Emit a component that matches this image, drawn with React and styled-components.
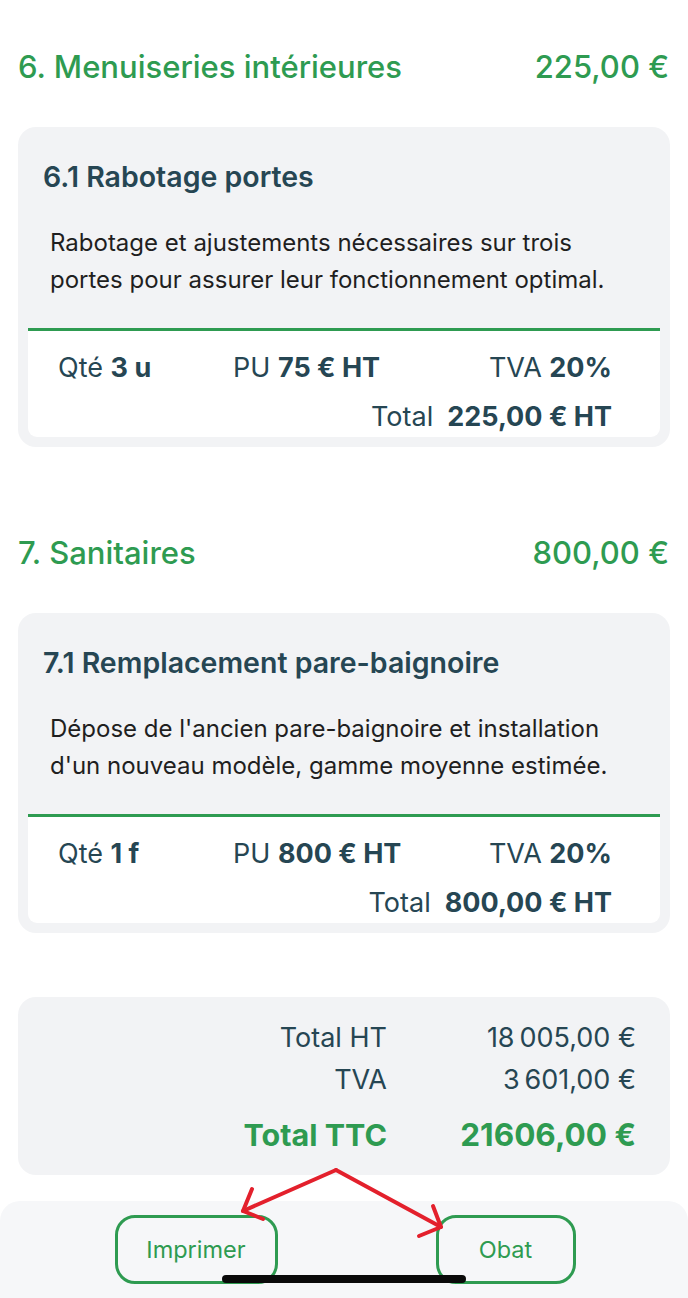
import React from "react";
import styled, { createGlobalStyle } from "styled-components";

const GlobalStyle = createGlobalStyle`
  body {
    margin: 0;
    background: #ffffff;
    font-family: Inter, "Open Sans", sans-serif;
  }
`;

const green = "#2e9b51";
const slate = "#264653";

const Page = styled.div`
  position: relative;
  width: 688px;
  height: 1298px;
  overflow: hidden;
  display: flex;
  flex-direction: column;
`;

const Content = styled.div`
  padding: 49px 18px 0;
  display: flex;
  flex-direction: column;
`;

const SectionHeader = styled.div`
  display: flex;
  justify-content: space-between;
  align-items: center;
  margin-top: ${(p) => (p.$first ? "0" : "88px")};
  font-size: 31px;
  line-height: 36px;
  font-weight: 500;
  color: ${green};
  padding-right: 1px;
`;

const Card = styled.div`
  margin-top: 42px;
  background: #f2f3f5;
  border-radius: 18px;
  padding: 34px 10px 10px;
`;

const ItemTitle = styled.h3`
  margin: 0 0 0 15px;
  font-size: 28.5px;
  line-height: 32px;
  font-weight: 600;
  color: ${slate};
`;

const ItemDesc = styled.p`
  margin: 31px 0 0 22px;
  font-size: 24px;
  line-height: 37px;
  color: #1f1f1f;
`;

const Details = styled.div`
  margin-top: 30px;
  background: #ffffff;
  border-top: 3px solid ${green};
  border-radius: 0 0 9px 9px;
  padding: 22px 48px 5px 30px;
  display: flex;
  flex-direction: column;
  gap: 19px;
  font-size: 27px;
  line-height: 30px;
  color: ${slate};
`;

const DetailRow = styled.div`
  display: grid;
  grid-template-columns: 175px 1fr auto;
  align-items: center;
`;

const TotalRow = styled.div`
  display: flex;
  justify-content: flex-end;
  gap: 14px;
`;

const Right = styled.span`
  text-align: right;
`;

const Strong = styled.b`
  font-weight: 700;
`;

const Summary = styled.div`
  margin-top: 64px;
  background: #f2f3f5;
  border-radius: 18px;
  padding: 26px 34px 22px;
  display: grid;
  grid-template-columns: 1fr 249px;
  row-gap: 12px;
  font-size: 27px;
  line-height: 30px;
  color: ${slate};
  text-align: right;
`;

const SummaryGrand = styled.span`
  margin-top: 10px;
  font-size: ${(p) => p.$size}px;
  line-height: 36px;
  font-weight: 700;
  color: ${green};
`;

const BottomBar = styled.div`
  margin-top: 26px;
  flex: 1;
  background: #f6f7f9;
  border-radius: 20px 20px 0 0;
  display: flex;
  justify-content: center;
  align-items: flex-start;
  gap: 158px;
  padding-top: 14px;
  padding-left: 2px;
`;

const ActionButton = styled.button`
  width: ${(p) => p.$w}px;
  height: 69px;
  border: 3px solid ${green};
  border-radius: 20px;
  background: transparent;
  color: ${green};
  font-family: Inter, "Open Sans", sans-serif;
  font-size: 23.5px;
  box-sizing: border-box;
  padding: 0;
`;

const HomeIndicator = styled.div`
  position: absolute;
  left: 222px;
  top: 1275px;
  width: 244px;
  height: 8px;
  border-radius: 4px;
  background: #0a0a0a;
`;

const Arrows = styled.svg`
  position: absolute;
  left: 0;
  top: 0;
  pointer-events: none;
`;

const sections = [
  {
    name: "6. Menuiseries intérieures",
    amount: "225,00 €",
    title: "6.1 Rabotage portes",
    desc: ["Rabotage et ajustements nécessaires sur trois", "portes pour assurer leur fonctionnement optimal."],
    qty: "3 u",
    pu: "75 € HT",
    tva: "20%",
    total: "225,00 € HT",
  },
  {
    name: "7. Sanitaires",
    amount: "800,00 €",
    title: "7.1 Remplacement pare-baignoire",
    desc: ["Dépose de l'ancien pare-baignoire et installation", "d'un nouveau modèle, gamme moyenne estimée."],
    qty: "1 f",
    pu: "800 € HT",
    tva: "20%",
    total: "800,00 € HT",
  },
];

export default function App() {
  return (
    <Page>
      <GlobalStyle />
      <Content>
        {sections.map((s, i) => (
          <React.Fragment key={s.name}>
            <SectionHeader $first={i === 0}>
              <span>{s.name}</span>
              <span>{s.amount}</span>
            </SectionHeader>
            <Card>
              <ItemTitle>{s.title}</ItemTitle>
              <ItemDesc>
                {s.desc[0]}
                <br />
                {s.desc[1]}
              </ItemDesc>
              <Details>
                <DetailRow>
                  <span>
                    Qté <Strong>{s.qty}</Strong>
                  </span>
                  <span>
                    PU <Strong>{s.pu}</Strong>
                  </span>
                  <Right>
                    TVA <Strong>{s.tva}</Strong>
                  </Right>
                </DetailRow>
                <TotalRow>
                  <span>Total</span>
                  <Strong>{s.total}</Strong>
                </TotalRow>
              </Details>
            </Card>
          </React.Fragment>
        ))}
        <Summary>
          <span>Total HT</span>
          <span>18{"\u202F"}005,00 €</span>
          <span>TVA</span>
          <span>3{"\u202F"}601,00 €</span>
          <SummaryGrand $size={30.5}>Total TTC</SummaryGrand>
          <SummaryGrand $size={31.5}>21606,00 €</SummaryGrand>
        </Summary>
      </Content>
      <BottomBar>
        <ActionButton $w={163}>Imprimer</ActionButton>
        <ActionButton $w={140}>Obat</ActionButton>
      </BottomBar>
      <HomeIndicator />
      <Arrows width="688" height="1298" viewBox="0 0 688 1298">
        <g fill="none" stroke="#e3202c" strokeWidth="4" strokeLinecap="round" strokeLinejoin="round">
          <path d="M336 1170 L243 1211" />
          <path d="M252 1189 L243 1211 L263 1219" />
          <path d="M336 1170 L441 1227" />
          <path d="M433 1206 L441 1227 L419 1236" />
        </g>
      </Arrows>
    </Page>
  );
}
